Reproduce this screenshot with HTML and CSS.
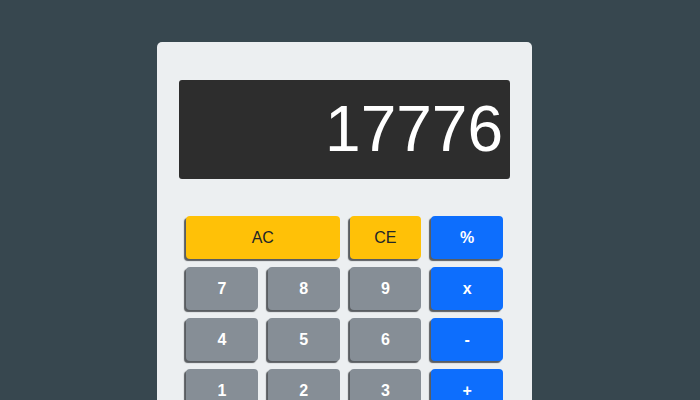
FILE: index.html
```html
<!DOCTYPE html>
<html lang="en">
<head>
<meta charset="utf-8">
<title>Calculator</title>
<link rel="stylesheet" href="styles.css">
</head>
<body>
<div class="calc">
  <div class="display">17776</div>
  <div class="keys">
    <button class="key warn wide">AC</button>
    <button class="key warn">CE</button>
    <button class="key op">%</button>
    <button class="key num">7</button>
    <button class="key num">8</button>
    <button class="key num">9</button>
    <button class="key op">x</button>
    <button class="key num">4</button>
    <button class="key num">5</button>
    <button class="key num">6</button>
    <button class="key op">-</button>
    <button class="key num">1</button>
    <button class="key num">2</button>
    <button class="key num">3</button>
    <button class="key op">+</button>
    <button class="key num wide">0</button>
    <button class="key num">.</button>
    <button class="key op">=</button>
  </div>
</div>
</body>
</html>
```
FILE: styles.css
```css
html, body {
  margin: 0;
  height: 100%;
  overflow: hidden;
}
body {
  background: #37474f;
  font-family: "Liberation Sans", Arial, sans-serif;
}
.calc {
  box-sizing: border-box;
  width: 375px;
  margin: 42px 0 0 157px;
  padding: 38px 22px 22px;
  background: #eceff1;
  border-radius: 5px;
}
.display {
  box-sizing: border-box;
  height: 99px;
  background: #2d2d2d;
  border-radius: 3px;
  color: #fff;
  font-size: 64px;
  display: flex;
  align-items: center;
  justify-content: flex-end;
  padding: 0 7px 2px;
}
.keys {
  margin-top: 37px;
  padding: 0 7px;
  display: grid;
  grid-template-columns: repeat(4, 1fr);
  grid-auto-rows: 43px;
  gap: 8px 10px;
}
.key {
  border: 0;
  border-radius: 4px;
  font-family: inherit;
  font-size: 16px;
  color: #fff;
  font-weight: bold;
  box-shadow: -2px 2px 1px rgba(40, 44, 48, 0.75);
  padding: 0;
}
.wide {
  grid-column: span 2;
}
.warn {
  background: #ffc107;
  color: #212529;
  font-weight: normal;
}
.num {
  background: #868e96;
}
.op {
  background: #0d6efd;
}
```
